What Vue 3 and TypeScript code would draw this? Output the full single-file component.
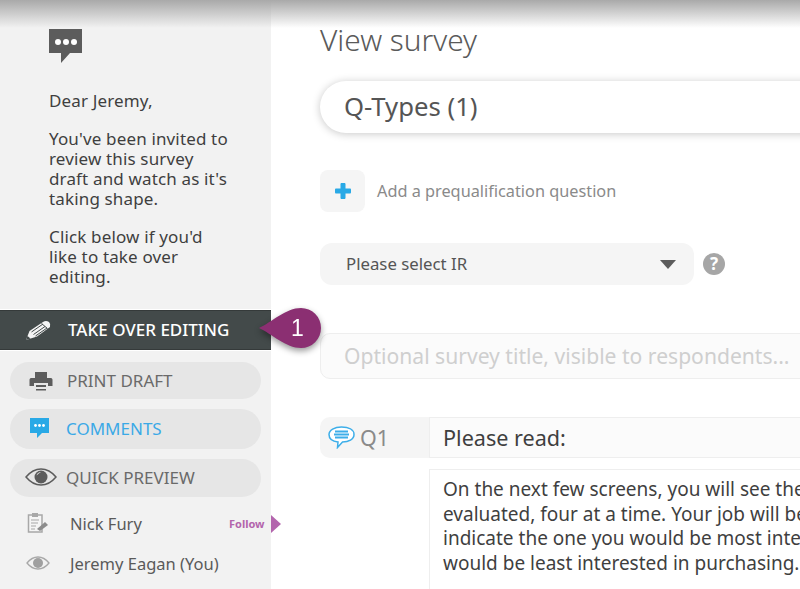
<script setup lang="ts">
const intro: string[] = ["You've been invited to", 'review this survey', "draft and watch as it's", 'taking shape.']
const cta: string[] = ["Click below if you'd", 'like to take over', 'editing.']
const body: string[] = [
  'On the next few screens, you will see the',
  'evaluated, four at a time. Your job will be',
  'indicate the one you would be most intere',
  'would be least interested in purchasing.'
]
</script>

<template>
  <div class="page">
    <aside class="side">
      <svg class="bubble" width="34" height="35" viewBox="0 0 34 35">
        <path d="M0 0H33V24H21L12 34V24H0Z" fill="#5c5c5c" />
        <circle cx="9" cy="13" r="3" fill="#fff" />
        <circle cx="17" cy="13" r="3" fill="#fff" />
        <circle cx="25" cy="13" r="3" fill="#fff" />
      </svg>
      <div class="letter">
        <p>Dear Jeremy,</p>
        <p><span v-for="l in intro" :key="l" class="ln">{{ l }}</span></p>
        <p><span v-for="l in cta" :key="l" class="ln">{{ l }}</span></p>
      </div>
      <div class="take">
        <svg width="25" height="20" viewBox="0 0 25 20">
          <path d="M0 20L3.500 11L17 2Q20 0 23 2Q25 4 24 7L11 16.500Z" fill="#f4f4f4" />
          <path d="M5.500 12L17 4M7.500 14.500L19 6.500M9.500 16L21 8M15.500 3.500L21.500 8.500" stroke="#434a4a" stroke-width="1" fill="none" />
          <path d="M0 20L1.500 16L4.500 18.500Z" fill="#434a4a" />
        </svg>
        <span class="lift">TAKE OVER EDITING</span>
      </div>
      <div class="pill p1">
        <svg width="24" height="20" viewBox="0 0 24 20">
          <path d="M6 1H18V7H6ZM2 7H22C23 7 23.500 8 23.500 9V15H19V12H5V15H.5V9C.5 8 1 7 2 7ZM7 14H17V16H7ZM7 18H17V19.500H7Z" fill="#5c5c5c" />
        </svg>
        <span>PRINT DRAFT</span>
      </div>
      <div class="pill p2 blue">
        <svg width="20" height="21" viewBox="0 0 20 21">
          <path d="M0 0H19V15H12L7 20V15H0Z" fill="#29a9e6" />
          <circle cx="5.500" cy="7.500" r="1.400" fill="#fff" />
          <circle cx="9.500" cy="7.500" r="1.400" fill="#fff" />
          <circle cx="13.500" cy="7.500" r="1.400" fill="#fff" />
        </svg>
        <span>COMMENTS</span>
      </div>
      <div class="pill p3">
        <svg class="eye" width="32" height="18" viewBox="0 0 32 18">
          <path d="M1 9C6 3 11 1 16 1S26 3 31 9C26 15 21 17 16 17S6 15 1 9Z" fill="none" stroke="#5c5c5c" stroke-width="1.500" />
          <circle cx="16" cy="9" r="6.500" fill="#5c5c5c" />
          <path d="M11.500 7.500C12 5.500 14 4 16 4C14.500 5 13 6 11.500 7.500Z" fill="#e6e6e6" />
        </svg>
        <span>QUICK PREVIEW</span>
      </div>
      <div class="user nick">
        <svg width="22" height="22" viewBox="0 0 22 22">
          <path d="M1.500 3H15V20H1.500Z" fill="#f5f5f5" stroke="#a8a8a8" stroke-width="1.500" />
          <path d="M5 1H11V5H5Z" fill="#a8a8a8" />
          <path d="M4 8H12M4 11H11M4 14H9M4 17H8" stroke="#a8a8a8" stroke-width="1.200" />
          <path d="M10 17L18 10L21 13L13 19Z" fill="#8c8c8c" />
        </svg>
        <span class="name">Nick Fury</span>
        <span class="follow">Follow</span>
      </div>
      <div class="user jer">
        <svg width="24" height="14" viewBox="0 0 24 14">
          <path d="M1 7C5 2 9 1 12 1S19 2 23 7C19 12 15 13 12 13S5 12 1 7Z" fill="none" stroke="#a8a8a8" stroke-width="1.300" />
          <circle cx="12" cy="7" r="5" fill="#a0a0a0" />
        </svg>
        <span class="name">Jeremy Eagan (You)</span>
      </div>
    </aside>

    <main class="main">
      <h1>View survey</h1>
      <div class="title">Q-Types (1)</div>
      <div class="addrow">
        <div class="plus">
          <svg width="16" height="16" viewBox="0 0 16 16">
            <path d="M5.500 1C5.500.5 6 0 6.500 0H9.500C10 0 10.500.5 10.500 1V5.500H15C15.500 5.500 16 6 16 6.500V9.500C16 10 15.500 10.500 15 10.500H10.500V15C10.500 15.500 10 16 9.500 16H6.500C6 16 5.500 15.500 5.500 15V10.500H1C.5 10.500 0 10 0 9.500V6.500C0 6 .5 5.500 1 5.500H5.500Z" fill="#29a9e6" />
          </svg>
        </div>
        <span>Add a prequalification question</span>
      </div>
      <div class="irrow">
        <div class="select">
          <span class="lift">Please select IR</span>
          <i class="caret"></i>
        </div>
        <div class="help">?</div>
      </div>
      <div class="optional">Optional survey title, visible to respondents...</div>
      <div class="qrow">
        <div class="qlabel">
          <svg width="27" height="23" viewBox="0 0 27 23">
            <path d="M13.500 1C20.500 1 26 3.500 26 8.500S20.500 16 14.500 16L9.500 21.500L10 16C5 15.500 1 13 1 8.500S6.500 1 13.500 1Z" fill="#fff" stroke="#3daee9" stroke-width="1.500" />
            <path d="M7 5.500H20M6 8.500H21M7 11.500H20" stroke="#3daee9" stroke-width="1.800" />
          </svg>
          <span>Q1</span>
        </div>
        <div class="qtext">Please read:</div>
      </div>
      <div class="qbody">
        <span v-for="l in body" :key="l" class="ln">{{ l }}</span>
      </div>
    </main>

    <div class="shade"></div>
    <svg class="callout" width="66" height="46" viewBox="0 0 66 46">
      <path d="M1 21C14 15 28 1 43 1A20 20 0 0 1 43 41C28 41 14 27 1 21Z" fill="#8b2f72" />
      <text x="39.500" y="29" text-anchor="middle" class="num">1</text>
    </svg>
    <i class="arrow"></i>
  </div>
</template>

<style>
html, body { margin: 0; background: #fff; }
</style>

<style scoped>
.page { position: relative; width: 800px; height: 589px; overflow: hidden; display: flex; font-family: "Noto Sans", "Open Sans", sans-serif; color: #4a4a4a; background: #fff; }
.ln { display: block; white-space: nowrap; }
.lift { padding-bottom: 2px; }
.side { width: 271px; flex: none; height: 589px; background: #f2f2f2; padding-top: 29px; box-sizing: border-box; }
.bubble { display: block; margin-left: 49px; }
.letter { margin: 27px 0 0 49px; font-size: 17px; letter-spacing: .15px; line-height: 20px; color: #3f3f3f; height: 219px; }
.letter p { margin: 0 0 18px; white-space: nowrap; }
.take { height: 38px; background: #434a4a; display: flex; align-items: center; padding-left: 26px; color: #fff; font-size: 17px; font-weight: 500; gap: 17px; border: solid #353a3a; border-width: 1px 0; box-shadow: 0 1px 0 #fff, 0 -1px 0 #fff; }
.pill { margin: 0 10px; background: #e6e6e6; border-radius: 20px; display: flex; align-items: center; font-size: 17px; color: #6a6a6a; box-sizing: border-box; }
.p1 { height: 37px; margin-top: 12px; padding-left: 19px; gap: 14px; }
.p2 { height: 40px; margin-top: 10px; padding: 0 0 2px 20px; gap: 16px; }
.p3 { height: 38px; margin-top: 10px; padding: 0 0 2px 15px; gap: 9px; }
.blue { color: #3ba9e6; }
.user { display: flex; align-items: center; font-size: 16.500px; color: #5a5a5a; position: relative; }
.nick { margin-top: 13px; height: 26px; padding-left: 27px; gap: 21px; }
.jer { margin-top: 14px; height: 26px; padding-left: 26px; gap: 20px; }
.follow { position: absolute; left: 229px; font-size: 11px; font-weight: 700; color: #b365ad; }
.main { flex: 1; min-width: 0; padding: 20px 0 0 49px; }
h1 { margin: 0; font-size: 29.800px; font-weight: 300; line-height: 40px; color: #5a5a5a; white-space: nowrap; }
.title { margin-top: 21px; margin-right: -60px; height: 52px; line-height: 52px; border-radius: 26px; padding-left: 24px; font-size: 25.700px; color: #555; background: #fff; box-shadow: 0 1px 8px rgba(0, 0, 0, .22); }
.addrow { margin-top: 37px; display: flex; align-items: center; gap: 12px; font-size: 16.300px; color: #8a8a8a; white-space: nowrap; }
.plus { width: 45px; height: 42px; border-radius: 8px; background: #f5f5f5; display: flex; align-items: center; justify-content: center; }
.irrow { margin-top: 31px; display: flex; align-items: center; gap: 9px; }
.select { width: 374px; height: 42px; box-sizing: border-box; border-radius: 12px; background: #f5f5f5; display: flex; align-items: center; justify-content: space-between; padding: 0 18px 0 26px; font-size: 16.800px; color: #555; }
.caret { width: 0; height: 0; border-left: 8px solid transparent; border-right: 8px solid transparent; border-top: 9px solid #5c5c5c; }
.help { width: 22px; height: 22px; border-radius: 50%; background: #a6a6a6; color: #fff; font-size: 17px; font-weight: 700; line-height: 22px; text-align: center; }
.optional { margin-top: 48px; margin-right: -60px; height: 46px; line-height: 44px; box-sizing: border-box; border: 1px solid #eee; border-radius: 10px; background: #fbfbfb; padding-left: 23px; font-size: 21.100px; color: #cfcfcf; white-space: nowrap; }
.qrow { margin-top: 38px; margin-right: -60px; height: 41px; display: flex; }
.qlabel { width: 109px; flex: none; box-sizing: border-box; background: #f5f5f5; border-radius: 10px 0 0 10px; display: flex; align-items: center; padding-left: 8px; gap: 5px; font-size: 21.500px; color: #8a8a8a; }
.qtext { flex: 1; background: #fbfbfb; border: 1px solid #eee; padding-left: 13px; line-height: 39px; font-size: 21.600px; color: #3f3f3f; }
.qbody { margin: 11px -60px 0 109px; height: 140px; border: 1px solid #eee; padding: 7px 13px; font-size: 19px; line-height: 24.500px; color: #3f3f3f; }
.shade { position: absolute; left: 0; top: 0; width: 800px; height: 28px; background: linear-gradient(#a9a9a9, rgba(255, 255, 255, 0)); pointer-events: none; }
.callout { position: absolute; left: 258px; top: 307px; filter: drop-shadow(0 3px 3px rgba(0, 0, 0, .4)); overflow: visible; }
.num { fill: #fff; font-size: 23px; font-family: "Liberation Sans", sans-serif; }
.arrow { position: absolute; left: 271px; top: 515px; width: 0; height: 0; border-top: 9px solid transparent; border-bottom: 9px solid transparent; border-left: 10px solid #b365ad; }
</style>
